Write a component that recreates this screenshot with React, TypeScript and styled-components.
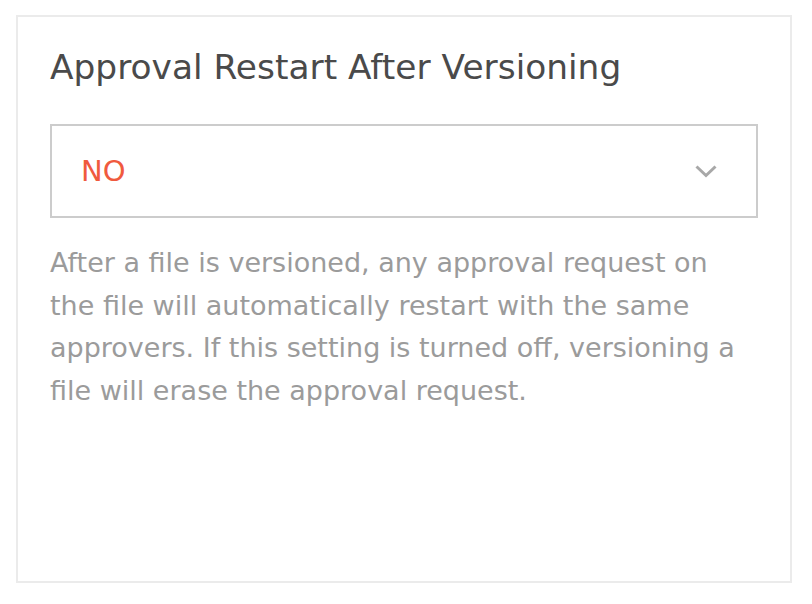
import React from 'react';
import styled, { createGlobalStyle } from 'styled-components';

const GlobalStyle = createGlobalStyle`
    html, body {
        margin: 0;
        padding: 0;
        background: #ffffff;
    }
    body {
        font-family: 'DejaVu Sans', 'Verdana', sans-serif;
    }
`;

const Page = styled.div`
    padding: 15px 20px 0 16px;
`;

const Card = styled.section`
    box-sizing: border-box;
    width: 776px;
    height: 568px;
    border: 2px solid #ebebeb;
    padding: 24px 32px 0 32px;
`;

const Title = styled.h2`
    margin: 0;
    font-size: 34.4px;
    font-weight: 400;
    line-height: 52px;
    color: #4a4a4a;
    white-space: nowrap;
`;

const Select = styled.div`
    box-sizing: border-box;
    margin-top: 31px;
    height: 94px;
    border: 2px solid #cccccc;
    display: flex;
    align-items: center;
    justify-content: space-between;
    padding: 0 39px 0 29px;
`;

const SelectValue = styled.span<{ $tone: string }>`
    font-size: 29px;
    line-height: 1;
    color: ${(props) => props.$tone};
`;

const Description = styled.p`
    margin: 24px 0 0 0;
    font-size: 27px;
    line-height: 42.7px;
    color: #9b9b9b;
    white-space: nowrap;
`;

const Chevron = () => (
    <svg width="22" height="13" viewBox="0 0 22 13" fill="none">
        <path d="M1.5 1.5 L11 10.5 L20.5 1.5" stroke="#a8a8a8" strokeWidth="3" />
    </svg>
);

export default function App() {
    return (
        <Page>
            <GlobalStyle />
            <Card>
                <Title>Approval Restart After Versioning</Title>
                <Select>
                    <SelectValue $tone="#f05a3e">NO</SelectValue>
                    <Chevron />
                </Select>
                <Description>
                    After a file is versioned, any approval request on
                    <br />
                    the file will automatically restart with the same
                    <br />
                    approvers. If this setting is turned off, versioning a
                    <br />
                    file will erase the approval request.
                </Description>
            </Card>
        </Page>
    );
}
